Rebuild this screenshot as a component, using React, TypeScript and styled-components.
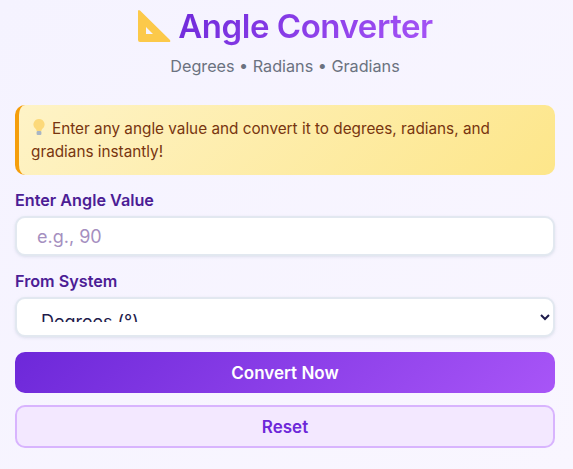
import { FC } from 'react'
import styled, { createGlobalStyle } from 'styled-components'

const GlobalStyle = createGlobalStyle`
  * {
    box-sizing: border-box;
  }

  body {
    margin: 0;
    background: linear-gradient(135deg, #f5f3ff 0%, #f9f6ff 100%);
    min-height: 469px;
    overflow: hidden;
    font-family: Inter, "Liberation Sans", sans-serif;
  }
`;

const Page = styled.div`
  height: 469px;
  padding: 0 18px 0 15px;
  display: flex;
  flex-direction: column;
`;

const Header = styled.header`
  display: flex;
  flex-direction: column;
  align-items: center;
  margin-bottom: 29px;
`;

const TitleRow = styled.div`
  display: flex;
  align-items: center;
  gap: 7px;
  height: 52px;
  margin-bottom: 5px;
`;

const Title = styled.h1`
  margin: 0;
  font-size: 33px;
  font-weight: 600;
  letter-spacing: -0.45px;
  line-height: 52px;
  background: linear-gradient(135deg, #6d28d9, #a855f7);
  -webkit-background-clip: text;
  background-clip: text;
  color: transparent;
`;

const Subtitle = styled.p`
  margin: 0;
  font-size: 16.2px;
  line-height: 19px;
  color: #6b7280;
`;

const Tip = styled.div`
  height: 70px;
  padding: 12px 12px;
  border-left: 4px solid #f59e0b;
  border-radius: 10px;
  background: linear-gradient(135deg, #fef3c7, #fde68a);
  color: #78350f;
  font-size: 15.3px;
  line-height: 23px;
  margin-bottom: 13px;
`;

const TipIcon = styled.svg`
  display: inline-block;
  width: 16px;
  height: 18px;
  margin: 0 5px 0 0;
  vertical-align: -2px;
`;

const Field = styled.div`
  display: flex;
  flex-direction: column;
  margin-bottom: 13px;
`;

const Label = styled.label`
  font-size: 16.2px;
  font-weight: 600;
  line-height: 24px;
  color: #4c1d95;
  margin-bottom: 4px;
`;

const inputBox = `
  width: 100%;
  height: 40px;
  border: 2px solid #e2e8f0;
  border-radius: 10px;
  background: #fff;
  box-shadow: 0 1px 3px rgba(148, 163, 184, 0.25);
  font-family: inherit;
  font-size: 18px;
  outline: none;
`;

const TextInput = styled.input`
  ${inputBox}
  padding: 0 20px;
  color: #1e1b4b;

  &::placeholder {
    color: #a58fc0;
    opacity: 1;
  }
`;

const Select = styled.select`
  ${inputBox}
  padding: 11px 20px 13px;
  color: #1e1b4b;
`;

const Button = styled.button<{ $variant: 'primary' | 'secondary' }>`
  width: 100%;
  font-family: inherit;
  font-size: 17px;
  font-weight: 600;
  border-radius: 10px;
  height: ${({ $variant }) => ($variant === 'primary' ? '41px' : '43px')};
  margin-top: ${({ $variant }) => ($variant === 'primary' ? '2px' : '0')};
  margin-bottom: ${({ $variant }) => ($variant === 'primary' ? '12px' : '0')};
  border: ${({ $variant }) => ($variant === 'primary' ? 'none' : '2px solid #d8b4fe')};
  background: ${({ $variant }) => ($variant === 'primary' ? 'linear-gradient(135deg, #6d28d9, #a855f7)' : '#f3e8ff')};
  color: ${({ $variant }) => ($variant === 'primary' ? '#fff' : '#6d28d9')};
`;

const App: FC = () => {
  return (
    <Page>
      <GlobalStyle />
      <Header>
        <TitleRow>
          <svg width="34" height="34" viewBox="0 0 34 34">
            <path
              fillRule="evenodd"
              d="M1 2.5 Q1 0 3 1.5 L33 31 Q34 33 32 33 L3 33 Q1 33 1 31 Z M9 18 L9 25 L16 25 Z"
              fill="#fcc94a"
            />
          </svg>
          <Title>Angle Converter</Title>
        </TitleRow>
        <Subtitle>Degrees • Radians • Gradians</Subtitle>
      </Header>
      <Tip>
        <TipIcon viewBox="0 0 16 18">
          <path d="M8 1a5.5 5.5 0 0 0-3.2 10c.6.5.8 1.2.8 2h4.8c0-.8.2-1.5.8-2A5.5 5.5 0 0 0 8 1z" fill="#fcd97a" />
          <rect x="5.6" y="13" width="4.8" height="4" rx="1" fill="#a9b6c4" />
        </TipIcon>
        Enter any angle value and convert it to degrees, radians, and gradians instantly!
      </Tip>
      <Field>
        <Label>Enter Angle Value</Label>
        <TextInput placeholder="e.g., 90" />
      </Field>
      <Field>
        <Label>From System</Label>
        <Select defaultValue="deg">
          <option value="deg">Degrees (°)</option>
          <option value="rad">Radians (rad)</option>
          <option value="grad">Gradians (gon)</option>
        </Select>
      </Field>
      <Button $variant="primary">Convert Now</Button>
      <Button $variant="secondary">Reset</Button>
    </Page>
  )
}

export default App
